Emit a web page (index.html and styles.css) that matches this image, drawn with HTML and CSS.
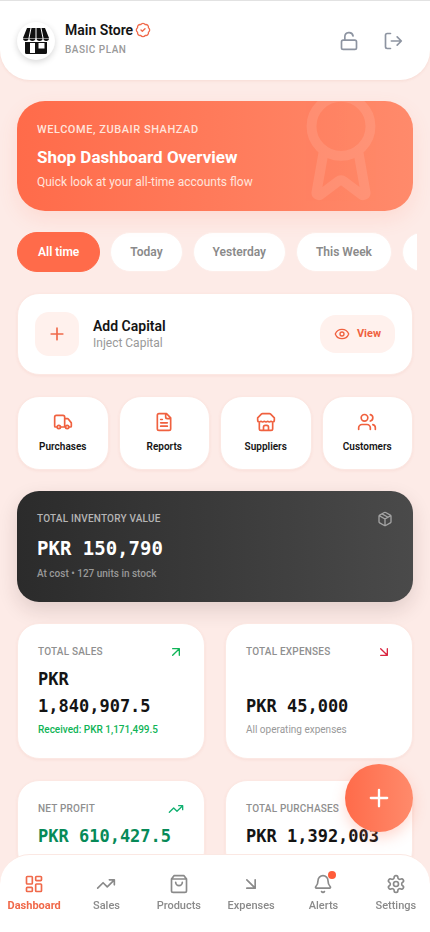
FILE: index.html
```html
<!DOCTYPE html>
<html lang="en">
<head>
<meta charset="utf-8">
<meta name="viewport" content="width=device-width, initial-scale=1">
<title>Shop Dashboard</title>
<link rel="stylesheet" href="styles.css">
</head>
<body>
<header class="topbar">
  <div class="logo">
    <svg width="28" height="28" viewBox="0 0 28 28" aria-hidden="true">
      <path d="M5 1h18l4 10H1z" fill="#111"/>
      <path d="M9 1 7 11M14 1v10M19 1l2 10" stroke="#fff" stroke-width="1"/>
      <path d="M1 11.5h5.6a2.8 2.4 0 0 1-5.6 0zM7.4 11.5h6a3 2.4 0 0 1-6 0zM14.6 11.5h6a3 2.4 0 0 1-6 0zM21.4 11.5H27a2.8 2.4 0 0 1-5.6 0z" fill="#111"/>
      <path d="M3 15h22v10.500a1.500 1.500 0 0 1-1.500 1.500h-19A1.500 1.500 0 0 1 3 25.500z" fill="#111"/>
      <path d="M8 16h5v10H8zM16.500 16h6v5.500h-6z" fill="#fff"/>
    </svg>
  </div>
  <div class="store">
    <div class="store-name">Main Store
      <svg class="icon badge" viewBox="0 0 24 24" role="img" aria-label="Verified"><path d="M3.850 8.620a4 4 0 0 1 4.780-4.770 4 4 0 0 1 6.740 0 4 4 0 0 1 4.780 4.780 4 4 0 0 1 0 6.740 4 4 0 0 1-4.770 4.780 4 4 0 0 1-6.750 0 4 4 0 0 1-4.780-4.770 4 4 0 0 1 0-6.760Z"/><path d="m9 12 2 2 4-4"/></svg>
    </div>
    <div class="plan">BASIC PLAN</div>
  </div>
  <div class="actions">
    <button type="button" aria-label="Lock"><svg class="icon" viewBox="0 0 24 24"><rect width="18" height="11" x="3" y="11" rx="2"/><path d="M7 11V7a5 5 0 0 1 9.900-1"/></svg></button>
    <button type="button" aria-label="Log out"><svg class="icon" viewBox="0 0 24 24"><path d="m17 17 5-5-5-5M22 12H10M9 21H5a2 2 0 0 1-2-2V5a2 2 0 0 1 2-2h4"/></svg></button>
  </div>
</header>

<main>
  <section class="banner">
    <svg class="award" viewBox="0 0 24 24" aria-hidden="true"><path d="m15.477 12.890 1.515 8.526a.5.5 0 0 1-.81.47l-3.580-2.687a1 1 0 0 0-1.197 0l-3.586 2.686a.5.5 0 0 1-.81-.469l1.514-8.526"/><circle cx="12" cy="8" r="6"/></svg>
    <p class="welcome">WELCOME, ZUBAIR SHAHZAD</p>
    <h1>Shop Dashboard Overview</h1>
    <p class="tagline">Quick look at your all-time accounts flow</p>
  </section>

  <div class="chips">
    <button type="button" class="chip active">All time</button>
    <button type="button" class="chip">Today</button>
    <button type="button" class="chip">Yesterday</button>
    <button type="button" class="chip">This Week</button>
    <button type="button" class="chip" aria-label="More periods"></button>
  </div>

  <section class="card capital">
    <div class="plus"><svg class="icon" viewBox="0 0 24 24" aria-hidden="true"><path d="M5 12h14M12 5v14"/></svg></div>
    <div class="capital-text">
      <h2>Add Capital</h2>
      <p>Inject Capital</p>
    </div>
    <button type="button" class="view"><svg class="icon" viewBox="0 0 24 24" aria-hidden="true"><path d="M2.062 12.348a1 1 0 0 1 0-.696 10.750 10.750 0 0 1 19.876 0 1 1 0 0 1 0 .696 10.750 10.750 0 0 1-19.876 0"/><circle cx="12" cy="12" r="3"/></svg>View</button>
  </section>

  <div class="tiles">
    <a href="#purchases" class="card tile"><svg class="icon" viewBox="0 0 24 24" aria-hidden="true"><path d="M14 18V6a2 2 0 0 0-2-2H4a2 2 0 0 0-2 2v11a1 1 0 0 0 1 1h2M15 18H9M19 18h2a1 1 0 0 0 1-1v-3.650a1 1 0 0 0-.22-.624l-3.480-4.350A1 1 0 0 0 17.520 8H14"/><circle cx="17" cy="18" r="2"/><circle cx="7" cy="18" r="2"/></svg>Purchases</a>
    <a href="#reports" class="card tile"><svg class="icon" viewBox="0 0 24 24" aria-hidden="true"><path d="M15 2H6a2 2 0 0 0-2 2v16a2 2 0 0 0 2 2h12a2 2 0 0 0 2-2V7ZM14 2v4a2 2 0 0 0 2 2h4M10 9H8M16 13H8M16 17H8"/></svg>Reports</a>
    <a href="#suppliers" class="card tile"><svg class="icon" viewBox="0 0 24 24" aria-hidden="true"><path d="m2 7 4.410-4.410A2 2 0 0 1 7.830 2h8.340a2 2 0 0 1 1.420.59L22 7v3a2 2 0 0 1-2 2 2.700 2.700 0 0 1-1.590-.63.7.7 0 0 0-.82 0A2.700 2.700 0 0 1 16 12a2.700 2.700 0 0 1-1.590-.63.7.7 0 0 0-.82 0A2.700 2.700 0 0 1 12 12a2.700 2.700 0 0 1-1.590-.63.7.7 0 0 0-.82 0A2.700 2.700 0 0 1 8 12a2.700 2.700 0 0 1-1.590-.63.7.7 0 0 0-.82 0A2.700 2.700 0 0 1 4 12a2 2 0 0 1-2-2ZM4 12v8a2 2 0 0 0 2 2h12a2 2 0 0 0 2-2v-8M15 22v-4a2 2 0 0 0-2-2h-2a2 2 0 0 0-2 2v4"/></svg>Suppliers</a>
    <a href="#customers" class="card tile"><svg class="icon" viewBox="0 0 24 24" aria-hidden="true"><path d="M16 21v-2a4 4 0 0 0-4-4H6a4 4 0 0 0-4 4v2M22 21v-2a4 4 0 0 0-3-3.870M16 3.130a4 4 0 0 1 0 7.750"/><circle cx="9" cy="7" r="4"/></svg>Customers</a>
  </div>

  <section class="inventory">
    <div class="row"><h2 class="label">TOTAL INVENTORY VALUE</h2>
      <svg class="icon" viewBox="0 0 24 24" aria-hidden="true"><path d="M11 21.730a2 2 0 0 0 2 0l7-4A2 2 0 0 0 21 16V8a2 2 0 0 0-1-1.730l-7-4a2 2 0 0 0-2 0l-7 4A2 2 0 0 0 3 8v8a2 2 0 0 0 1 1.730zM12 22V12M3.290 7 12 12l8.710-5M7.500 4.270l9 5.150"/></svg></div>
    <p class="amount">PKR 150,790</p>
    <p class="note">At cost • 127 units in stock</p>
  </section>

  <div class="stats">
    <section class="card stat">
      <div class="row"><h2 class="label">TOTAL SALES</h2><svg class="icon green" viewBox="0 0 24 24" aria-hidden="true"><path d="M7 7h10v10M7 17 17 7"/></svg></div>
      <p class="amount">PKR 1,840,907.5</p>
      <p class="note received">Received: PKR 1,171,499.5</p>
    </section>
    <section class="card stat">
      <div class="row"><h2 class="label">TOTAL EXPENSES</h2><svg class="icon red" viewBox="0 0 24 24" aria-hidden="true"><path d="m7 7 10 10M17 7v10H7"/></svg></div>
      <p class="amount">PKR 45,000</p>
      <p class="note">All operating expenses</p>
    </section>
    <section class="card stat">
      <div class="row"><h2 class="label">NET PROFIT</h2><svg class="icon profit" viewBox="0 0 24 24" aria-hidden="true"><path d="M16 7h6v6M22 7l-8.500 8.500-5-5L2 17"/></svg></div>
      <p class="amount profit">PKR 610,427.5</p>
    </section>
    <section class="card stat">
      <div class="row"><h2 class="label">TOTAL PURCHASES</h2></div>
      <p class="amount">PKR 1,392,003</p>
    </section>
  </div>
</main>

<button type="button" class="fab" aria-label="Add"><svg class="icon" viewBox="0 0 24 24"><path d="M5 12h14M12 5v14"/></svg></button>

<nav class="tabs">
  <div class="tab-grid">
    <a href="#dashboard" class="tab current"><svg class="icon" viewBox="0 0 24 24" aria-hidden="true"><rect width="7" height="9" x="3" y="3" rx="1"/><rect width="7" height="5" x="14" y="3" rx="1"/><rect width="7" height="9" x="14" y="12" rx="1"/><rect width="7" height="5" x="3" y="16" rx="1"/></svg>Dashboard</a>
    <a href="#sales" class="tab"><svg class="icon" viewBox="0 0 24 24" aria-hidden="true"><path d="M16 7h6v6M22 7l-8.500 8.500-5-5L2 17"/></svg>Sales</a>
    <a href="#products" class="tab"><svg class="icon" viewBox="0 0 24 24" aria-hidden="true"><path d="M6 2 3 6v14a2 2 0 0 0 2 2h14a2 2 0 0 0 2-2V6l-3-4ZM3 6h18M16 10a4 4 0 0 1-8 0"/></svg>Products</a>
    <a href="#expenses" class="tab"><svg class="icon" viewBox="0 0 24 24" aria-hidden="true"><path d="m7 7 10 10M17 7v10H7"/></svg>Expenses</a>
    <a href="#alerts" class="tab"><span class="bell"><svg class="icon" viewBox="0 0 24 24" aria-hidden="true"><path d="M10.268 21a2 2 0 0 0 3.464 0M3.262 15.326A1 1 0 0 0 4 17h16a1 1 0 0 0 .74-1.673C19.410 13.956 18 12.499 18 8A6 6 0 0 0 6 8c0 4.499-1.411 5.956-2.738 7.326"/></svg><span class="dot"></span></span>Alerts</a>
    <a href="#settings" class="tab"><svg class="icon" viewBox="0 0 24 24" aria-hidden="true"><path d="M12.220 2h-.44a2 2 0 0 0-2 2v.18a2 2 0 0 1-1 1.730l-.43.25a2 2 0 0 1-2 0l-.15-.08a2 2 0 0 0-2.730.73l-.22.38a2 2 0 0 0 .73 2.730l.15.1a2 2 0 0 1 1 1.720v.51a2 2 0 0 1-1 1.740l-.15.09a2 2 0 0 0-.73 2.730l.22.38a2 2 0 0 0 2.730.73l.15-.08a2 2 0 0 1 2 0l.43.25a2 2 0 0 1 1 1.730V20a2 2 0 0 0 2 2h.44a2 2 0 0 0 2-2v-.18a2 2 0 0 1 1-1.730l.43-.25a2 2 0 0 1 2 0l.15.08a2 2 0 0 0 2.730-.73l.22-.39a2 2 0 0 0-.73-2.730l-.15-.08a2 2 0 0 1-1-1.740v-.5a2 2 0 0 1 1-1.740l.15-.09a2 2 0 0 0 .73-2.730l-.22-.38a2 2 0 0 0-2.730-.73l-.15.08a2 2 0 0 1-2 0l-.43-.25a2 2 0 0 1-1-1.730V4a2 2 0 0 0-2-2z"/><circle cx="12" cy="12" r="3"/></svg>Settings</a>
  </div>
</nav>
</body>
</html>
```
FILE: styles.css
```css
* { box-sizing: border-box; }

html { scrollbar-width: none; background: #fdebe7; }

body {
  margin: 0;
  background: #fdebe7;
  color: #141414;
  font-family: Roboto, "Liberation Sans", sans-serif;
  font-size: 12px;
  line-height: 16px;
}

h1, h2, p { margin: 0; }
a { color: inherit; text-decoration: none; }
button { border: 0; padding: 0; background: none; font: inherit; color: inherit; cursor: pointer; }

.icon {
  display: block;
  flex: none;
  width: 20px;
  height: 20px;
  fill: none;
  stroke: currentColor;
  stroke-width: 2;
  stroke-linecap: round;
  stroke-linejoin: round;
}

.topbar {
  display: flex;
  align-items: center;
  gap: 10px;
  height: 80px;
  padding: 0 27px 0 17px;
  background: #fff;
  border-top: 1px solid #e2e2e2;
  border-radius: 0 0 30px 30px;
  box-shadow: 0 1px 3px rgba(200, 90, 60, 0.1);
}
.logo {
  display: grid;
  place-items: center;
  width: 38px;
  height: 38px;
  border-radius: 50%;
  background: #fff;
  box-shadow: 0 2px 6px rgba(0, 0, 0, 0.16);
}
.store { flex: 1; padding-bottom: 2px; }
.store-name {
  display: flex;
  align-items: center;
  gap: 2px;
  font-size: 14px;
  line-height: 18px;
  font-weight: 600;
}
.badge { width: 16px; height: 16px; color: #f0694a; }
.plan {
  margin-top: 3px;
  font-size: 10px;
  font-weight: 500;
  letter-spacing: 0.05em;
  color: #999;
}
.actions { display: flex; gap: 24px; color: #8d94a1; }

main {
  display: flex;
  flex-direction: column;
  gap: 21px;
  padding: 21px 17px 100px;
}

.banner {
  position: relative;
  overflow: hidden;
  padding: 21px 20px;
  border-radius: 28px;
  background: linear-gradient(90deg, #ff6b4a, #ff8a6b);
  box-shadow: 0 8px 20px rgba(255, 107, 74, 0.12);
  color: #fff;
}
.award {
  position: absolute;
  top: -15px;
  right: 13px;
  width: 118px;
  height: 120px;
  fill: none;
  stroke: #fff;
  stroke-width: 2;
  stroke-linecap: round;
  stroke-linejoin: round;
  opacity: 0.1;
}
.welcome { font-size: 11px; font-weight: 500; letter-spacing: 0.05em; color: #ffe4dc; }
h1 { margin: 7px 0 5px; font-size: 17px; line-height: 24px; font-weight: 700; }
.tagline { color: #ffe4dc; }

.chips {
  display: flex;
  align-items: center;
  gap: 10px;
  margin-right: -4px;
  overflow-x: auto;
  scrollbar-width: none;
}
.chip {
  flex: none;
  min-width: 70px;
  height: 40px;
  padding: 0 19px;
  border: 1px solid #fdeeea;
  border-radius: 20px;
  background: #fff;
  color: #8a8a8a;
  font-weight: 600;
}
.chip.active { padding: 0 20px; background: #ff6b4a; border-color: #ff6b4a; color: #fff; }

.card {
  background: #fff;
  border: 1px solid #fce8e3;
  border-radius: 22px;
  box-shadow: 0 1px 3px rgba(200, 90, 60, 0.08);
}

.capital { display: flex; align-items: center; gap: 14px; padding: 18px 17px; }
.plus {
  display: grid;
  place-items: center;
  width: 44px;
  height: 44px;
  border-radius: 14px;
  background: #fff1ed;
  color: #f0694a;
}
.capital-text { flex: 1; color: #999; }
.capital-text h2 { font-size: 14px; line-height: 18px; font-weight: 600; color: #141414; }
.view {
  display: flex;
  align-items: center;
  gap: 7px;
  height: 38px;
  padding: 0 14px;
  border-radius: 16px;
  background: #fff1ed;
  color: #f0613f;
  font-size: 11px;
  font-weight: 700;
}
.view .icon { width: 16px; height: 16px; }

.tiles { display: grid; grid-template-columns: repeat(4, 1fr); gap: 10px; }
.tile {
  display: flex;
  flex-direction: column;
  align-items: center;
  gap: 7px;
  padding: 15px 0;
  font-size: 10px;
  line-height: 15px;
  font-weight: 600;
}
.tile .icon { color: #f0613f; }

.row { display: flex; justify-content: space-between; align-items: center; height: 16px; }
.label { font-size: 10px; line-height: 16px; font-weight: 500; letter-spacing: 0.02em; color: #8f8f8f; }
.amount {
  font-family: "DejaVu Sans Mono", "Liberation Mono", monospace;
  font-size: 17px;
  line-height: 27px;
  font-weight: 700;
}
.note { font-size: 10px; color: #999; }

.inventory {
  padding: 20px;
  border-radius: 22px;
  background: linear-gradient(90deg, #2b2b2b, #4a4a4a);
  box-shadow: 0 8px 20px rgba(60, 30, 30, 0.14);
  color: #fff;
}
.inventory .label { color: #b5b5b5; }
.inventory .icon { width: 16px; height: 16px; color: #a3a3a3; }
.inventory .amount { margin: 8px 0 4px; font-size: 19px; }
.inventory .note { font-weight: 500; }

.stats { display: grid; grid-template-columns: 1fr 1fr; gap: 21px 20px; }
.stat {
  display: flex;
  flex-direction: column;
  padding: 20px;
}
.stat .row { margin-bottom: 6px; }
.stat .amount { margin: auto 0 2px; }
.stat .icon { width: 16px; height: 16px; }
.green, .note.received { color: #0fb457; }
.note.received { font-weight: 500; }
.red { color: #d92540; }
.icon.profit { color: #10b070; }
.amount.profit { color: #078a58; }

.fab {
  position: fixed;
  right: 17px;
  bottom: 100px;
  display: grid;
  place-items: center;
  width: 68px;
  height: 68px;
  border-radius: 50%;
  background: linear-gradient(90deg, #ff6b4a, #ff8a6b);
  box-shadow: 0 6px 14px rgba(255, 107, 74, 0.25);
  color: #fff;
}
.fab .icon { width: 28px; height: 28px; }

.tabs {
  position: fixed;
  inset: auto 0 0;
  overflow: hidden;
  padding: 19px 0 18px;
  background: #fff;
  border-top: 1px solid #fbe8e3;
  border-radius: 30px 30px 0 0;
}
.tab-grid { display: grid; grid-template-columns: repeat(6, 1fr); margin: 0 -2px; }
.tab {
  display: flex;
  flex-direction: column;
  align-items: center;
  gap: 4px;
  color: #8a8a8a;
  font-size: 11px;
  font-weight: 500;
}
.tab.current { color: #f0694a; font-weight: 700; }
.bell { position: relative; }
.dot {
  position: absolute;
  top: -3px;
  right: -3px;
  width: 8px;
  height: 8px;
  border-radius: 50%;
  background: #ff5c3a;
}
```
